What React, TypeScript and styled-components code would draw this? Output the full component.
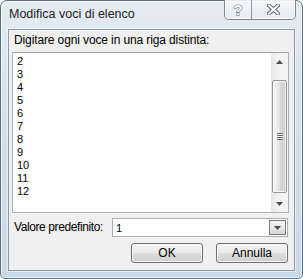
import styled, { createGlobalStyle } from 'styled-components';

const GlobalStyle = createGlobalStyle`
  html, body {
    margin: 0;
    padding: 0;
    background: #fff;
  }
  body {
    font-family: "Liberation Sans", Arial, sans-serif;
  }
`;

const Frame = styled.div`
  width: 303px;
  height: 279px;
  box-sizing: border-box;
  border: 1px solid #5d6f86;
  border-radius: 7px 7px 5px 5px;
  padding: 0 7px 7px 7px;
  display: flex;
  flex-direction: column;
  background: linear-gradient(180deg, #e6ecf3 0%, #dbe4ee 25%, #d2dde9 60%, #cbd8e6 100%);
  box-shadow: inset 0 0 0 1px rgba(255, 255, 255, 0.65);
`;

const TitleBar = styled.div`
  height: 28px;
  display: flex;
  align-items: flex-start;
`;

const Caption = styled.div`
  margin: 5px 0 0 1px;
  font-size: 12.5px;
  line-height: 16px;
  color: #222;
`;

const CaptionButtons = styled.div`
  margin: -1px -1px 0 auto;
  display: flex;
  height: 19px;
  border: 1px solid #7c8a9c;
  border-top: 0;
  border-radius: 0 0 5px 5px;
  overflow: hidden;
  background: linear-gradient(180deg, rgba(255, 255, 255, 0.55), rgba(235, 240, 246, 0.35));
  box-shadow: inset 0 0 0 1px rgba(255, 255, 255, 0.7);
`;

const CaptionBtn = styled.div<{ $w: number }>`
  width: ${(p) => p.$w}px;
  height: 100%;
  display: flex;
  align-items: center;
  justify-content: center;
  & + & {
    border-left: 1px solid #8a97a8;
  }
`;

const Client = styled.div`
  flex: 1;
  border: 1px solid #8e9aa8;
  background: #f0f0f0;
  display: flex;
  flex-direction: column;
  box-shadow: 0 0 0 1px rgba(255, 255, 255, 0.55);
`;

const Label = styled.div<{ $tight?: number }>`
  font-size: 12px;
  line-height: 15px;
  color: #000;
  padding-left: 5px;
  letter-spacing: ${(p) => p.$tight ?? 0}px;
  white-space: nowrap;
`;

const TopLabel = styled(Label)`
  margin-top: 3px;
`;

const ListBox = styled.div`
  margin: 4px 5px 0 3px;
  height: 161px;
  box-sizing: border-box;
  border: 1px solid #a9b0b8;
  border-top-color: #9ca3ac;
  background: #fff;
  display: flex;
`;

const Lines = styled.div`
  flex: 1;
  padding: 2px 0 0 4px;
  font-size: 11px;
  line-height: 13px;
  color: #000;
`;

const Scrollbar = styled.div`
  width: 17px;
  display: flex;
  flex-direction: column;
  background: linear-gradient(90deg, #e6e6e6 0%, #f2f2f2 40%, #f4f4f4 100%);
`;

const ArrowBtn = styled.div`
  height: 17px;
  display: flex;
  align-items: center;
  justify-content: center;
`;

const Track = styled.div<{ $before: number; $after: number }>`
  flex: 1;
  display: flex;
  flex-direction: column;
  padding: ${(p) => p.$before}px 1px ${(p) => p.$after}px 1px;
`;

const Thumb = styled.div`
  flex: 1;
  box-sizing: border-box;
  border: 1px solid #979797;
  border-radius: 2px;
  background: linear-gradient(90deg, #f4f4f4 0%, #e8e8e8 45%, #d9d9d9 55%, #cfcfcf 100%);
  box-shadow: inset 0 0 0 1px rgba(255, 255, 255, 0.7);
  display: flex;
  align-items: center;
  justify-content: center;
`;

const Grip = styled.div`
  width: 6px;
  height: 7px;
  background: repeating-linear-gradient(180deg, #6f6f6f 0 1px, #f2f2f2 1px 2px);
`;

const ComboRow = styled.div`
  margin-top: 5px;
  display: flex;
  align-items: center;
  height: 19px;
`;

const Combo = styled.div`
  margin-left: auto;
  margin-right: 6px;
  width: 176px;
  height: 19px;
  box-sizing: border-box;
  border: 1px solid #a9b0b8;
  background: #fff;
  display: flex;
  align-items: center;
  font-size: 11px;
  padding: 1px 1px 1px 3px;
`;

const ComboValue = styled.span`
  flex: 1;
`;

const DropBtn = styled.div`
  width: 17px;
  height: 15px;
  box-sizing: border-box;
  border: 1px solid #7a7a7a;
  background: linear-gradient(180deg, #f4f4f4 0%, #e6e6e6 50%, #d6d6d6 100%);
  display: flex;
  align-items: center;
  justify-content: center;
`;

const ButtonRow = styled.div`
  margin: 6px 6px 0 0;
  display: flex;
  justify-content: flex-end;
  gap: 13px;
`;

const Button = styled.button`
  width: 72px;
  height: 20px;
  padding: 0;
  border: 1px solid #707070;
  border-radius: 3px;
  background: linear-gradient(180deg, #f2f2f2 0%, #ebebeb 50%, #dddddd 51%, #cfcfcf 100%);
  box-shadow: inset 0 0 0 1px rgba(252, 252, 252, 0.85);
  font-family: "Liberation Sans", Arial, sans-serif;
  font-size: 12px;
  color: #000;
`;

const Tri = ({ up }: { up?: boolean }) => (
  <svg width="7" height="4" viewBox="0 0 7 4">
    <path d={up ? 'M0 4 L3.5 0 L7 4 Z' : 'M0 0 L7 0 L3.5 4 Z'} fill="#4a4a4a" />
  </svg>
);

const items = ['2', '3', '4', '5', '6', '7', '8', '9', '10', '11', '12'];

function App() {
  return (
    <>
      <GlobalStyle />
      <Frame>
        <TitleBar>
          <Caption>Modifica voci di elenco</Caption>
          <CaptionButtons>
            <CaptionBtn $w={26}>
              <svg width="12" height="15" viewBox="0 0 12 15">
                <text
                  x="6"
                  y="13"
                  textAnchor="middle"
                  fontFamily="Liberation Sans, Arial, sans-serif"
                  fontWeight="bold"
                  fontSize="15"
                  fill="#fff"
                  stroke="#5b6b80"
                  strokeWidth="1"
                  paintOrder="stroke"
                >
                  ?
                </text>
              </svg>
            </CaptionBtn>
            <CaptionBtn $w={43}>
              <svg width="13" height="11" viewBox="0 0 13 11">
                <path d="M2 1.5 L11 9.5 M11 1.5 L2 9.5" stroke="#5b6b80" strokeWidth="4" strokeLinecap="square" />
                <path d="M2 1.5 L11 9.5 M11 1.5 L2 9.5" stroke="#fff" strokeWidth="2" strokeLinecap="square" />
              </svg>
            </CaptionBtn>
          </CaptionButtons>
        </TitleBar>
        <Client>
          <TopLabel $tight={-0.12}>Digitare ogni voce in una riga distinta:</TopLabel>
          <ListBox>
            <Lines>
              {items.map((n) => (
                <div key={n}>{n}</div>
              ))}
            </Lines>
            <Scrollbar>
              <ArrowBtn>
                <Tri up />
              </ArrowBtn>
              <Track $before={10} $after={2}>
                <Thumb>
                  <Grip />
                </Thumb>
              </Track>
              <ArrowBtn>
                <Tri />
              </ArrowBtn>
            </Scrollbar>
          </ListBox>
          <ComboRow>
            <Label $tight={-0.4}>Valore predefinito:</Label>
            <Combo>
              <ComboValue>1</ComboValue>
              <DropBtn>
                <Tri />
              </DropBtn>
            </Combo>
          </ComboRow>
          <ButtonRow>
            <Button>OK</Button>
            <Button>Annulla</Button>
          </ButtonRow>
        </Client>
      </Frame>
    </>
  );
}

export default App;
